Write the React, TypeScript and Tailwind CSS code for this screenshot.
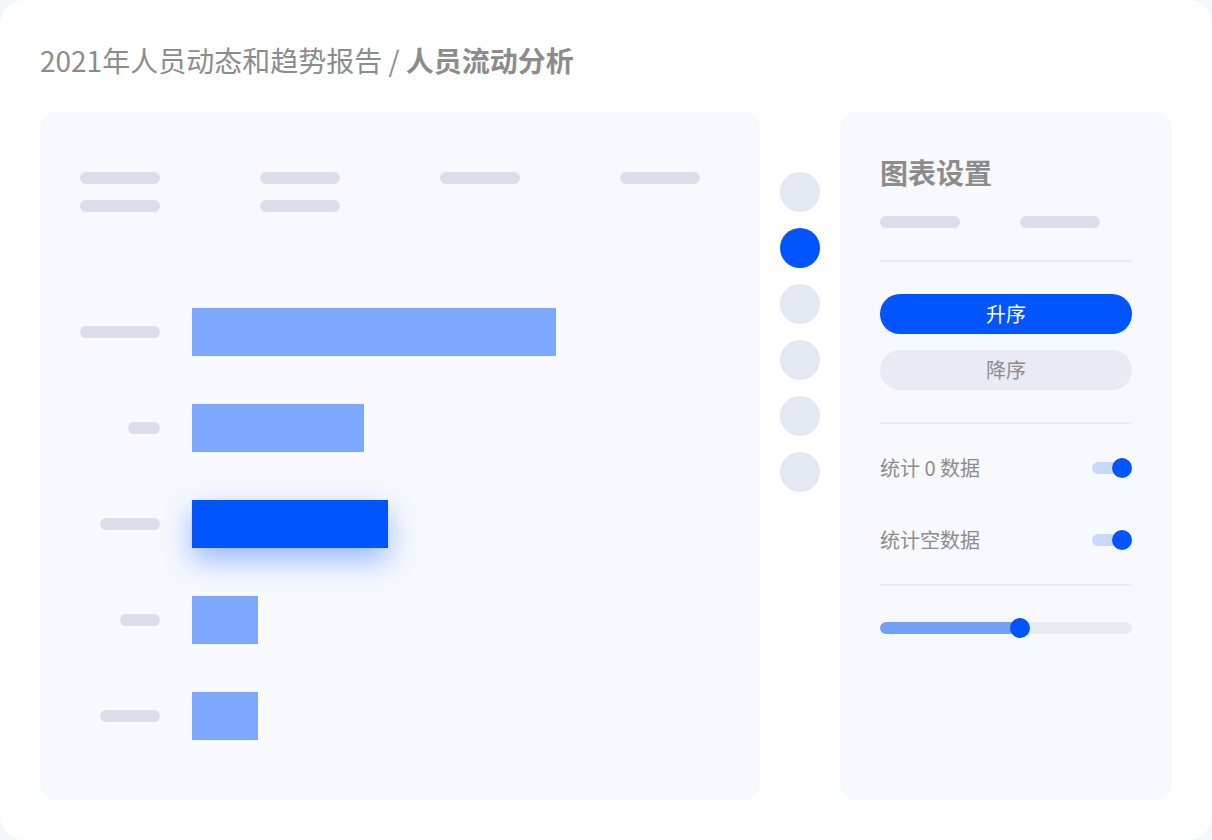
import React from "react";

const font = { fontFamily: '"Noto Sans CJK SC", "Noto Sans", sans-serif' };

const bars = [
  { label: 80, width: 364, active: false },
  { label: 32, width: 172, active: false },
  { label: 60, width: 196, active: true },
  { label: 40, width: 66, active: false },
  { label: 60, width: 66, active: false },
];

function Skeleton({ w = 80 }: { w?: number }) {
  return <div className="h-3 rounded-full bg-[#d9deea]" style={{ width: w }} />;
}

function Toggle() {
  return (
    <div className="relative w-10 h-5 flex items-center">
      <div className="h-3 w-[34px] rounded-full bg-[#c8dafc]" />
      <div className="absolute right-0 top-0 w-5 h-5 rounded-full bg-[#0055ff]" />
    </div>
  );
}

export default function App() {
  return (
    <div className="w-[1212px] h-[840px] bg-[#f4f6fb]" style={font}>
      <div className="w-full h-full bg-white rounded-[24px] px-10 pt-10">
        {/* Title */}
        <h1 className="h-10 leading-10 text-[28px] text-[#8c8c8c] whitespace-nowrap">
          2021年人员动态和趋势报告 / <span className="font-bold">人员流动分析</span>
        </h1>

        <div className="mt-8 flex gap-5 h-[688px]">
          {/* Chart panel */}
          <div className="w-[720px] h-full rounded-2xl bg-[#f7f9fe] px-10 pt-[60px]">
            <div className="flex flex-col gap-4">
              <div className="flex gap-[100px]">
                <Skeleton />
                <Skeleton />
                <Skeleton />
                <Skeleton />
              </div>
              <div className="flex gap-[100px]">
                <Skeleton />
                <Skeleton />
              </div>
            </div>

            <div className="mt-24 flex flex-col gap-12">
              {bars.map((b, i) => (
                <div key={i} className="flex items-center gap-8 h-12">
                  <div className="w-20 flex justify-end">
                    <Skeleton w={b.label} />
                  </div>
                  <div
                    className={
                      b.active
                        ? "h-12 bg-[#0055ff] shadow-[0_12px_30px_rgba(0,85,255,0.4)]"
                        : "h-12 bg-[#7ea8ff]"
                    }
                    style={{ width: b.width }}
                  />
                </div>
              ))}
            </div>
          </div>

          {/* Dots */}
          <div className="w-10 pt-[60px] flex flex-col gap-4">
            {[0, 1, 2, 3, 4, 5].map((i) => (
              <div
                key={i}
                className={
                  i === 1
                    ? "w-10 h-10 rounded-full bg-[#0055ff]"
                    : "w-10 h-10 rounded-full bg-[#e4e8f2]"
                }
              />
            ))}
          </div>

          {/* Settings panel */}
          <div className="w-[332px] h-full rounded-2xl bg-[#f7f9fe] px-10 pt-[42px]">
            <h2 className="h-9 leading-9 text-[28px] font-bold text-[#8c8c8c]">图表设置</h2>
            <div className="mt-[26px] flex gap-[60px]">
              <Skeleton />
              <Skeleton />
            </div>
            <div className="mt-8 h-[2px] bg-[#e9ecf3]" />

            <button className="mt-8 w-full h-10 rounded-full bg-[#0055ff] text-white text-[20px] leading-10">
              升序
            </button>
            <button className="mt-4 w-full h-10 rounded-full bg-[#e8ebf4] text-[#8c8c8c] text-[20px] leading-10">
              降序
            </button>
            <div className="mt-8 h-[2px] bg-[#e9ecf3]" />

            <div className="mt-6 h-10 flex items-center justify-between">
              <span className="text-[20px] text-[#8c8c8c]">统计 0 数据</span>
              <Toggle />
            </div>
            <div className="mt-8 h-10 flex items-center justify-between">
              <span className="text-[20px] text-[#8c8c8c]">统计空数据</span>
              <Toggle />
            </div>
            <div className="mt-6 h-[2px] bg-[#e9ecf3]" />

            <div className="mt-8 relative h-5 flex items-center">
              <div className="w-full h-3 rounded-full bg-[#e8ebf4]">
                <div className="h-3 w-[140px] rounded-full bg-[#73a0f7]" />
              </div>
              <div className="absolute left-[130px] top-0 w-5 h-5 rounded-full bg-[#0055ff]" />
            </div>
          </div>
        </div>
      </div>
    </div>
  );
}
